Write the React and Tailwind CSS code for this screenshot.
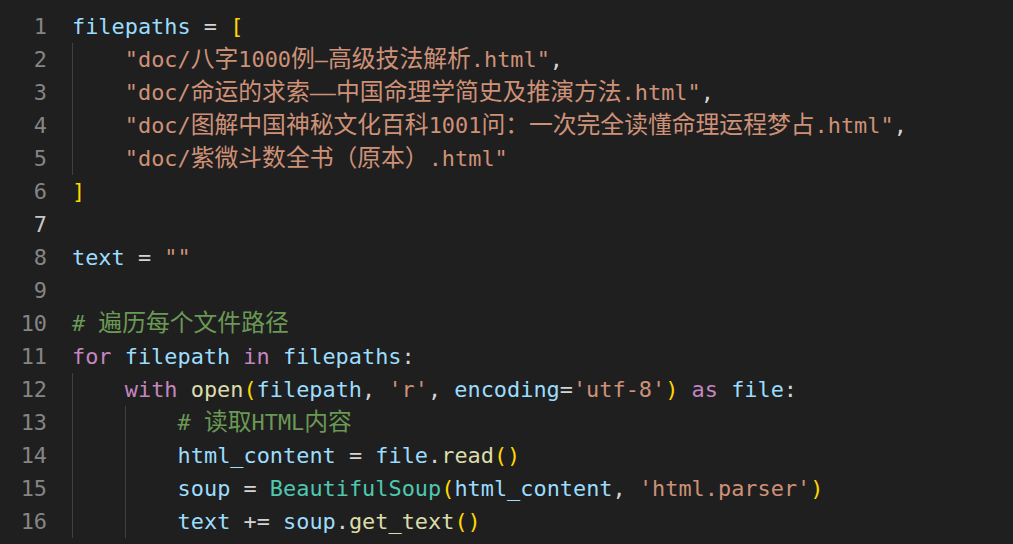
import React from 'react'

// VS Code Dark+ token colours
const V = 'text-[#9cdcfe]'
const O = 'text-[#d4d4d4]'
const Y = 'text-[#ffd700]'
const S = 'text-[#ce9178]'
const C = 'text-[#6a9955]'
const K = 'text-[#c586c0]'
const F = 'text-[#dcdcaa]'
const T = 'text-[#4ec9b0]'

const lines = [
  { indent: 0, t: [['filepaths', V], [' = ', O], ['[', Y]] },
  { indent: 1, t: [['"doc/八字1000例—高级技法解析.html"', S], [',', O]] },
  { indent: 1, t: [['"doc/命运的求索——中国命理学简史及推演方法.html"', S], [',', O]] },
  { indent: 1, t: [['"doc/图解中国神秘文化百科1001问：一次完全读懂命理运程梦占.html"', S], [',', O]] },
  { indent: 1, t: [['"doc/紫微斗数全书（原本）.html"', S]] },
  { indent: 0, t: [[']', Y]] },
  { indent: 0, t: [], active: true },
  { indent: 0, t: [['text', V], [' = ', O], ['""', S]] },
  { indent: 0, t: [] },
  { indent: 0, t: [['# 遍历每个文件路径', C]] },
  { indent: 0, t: [['for', K], [' ', O], ['filepath', V], [' ', O], ['in', K], [' ', O], ['filepaths', V], [':', O]] },
  {
    indent: 1,
    t: [
      ['with', K], [' ', O], ['open', F], ['(', Y], ['filepath', V], [', ', O], ["'r'", S], [', ', O],
      ['encoding', V], ['=', O], ["'utf-8'", S], [')', Y], [' ', O], ['as', K], [' ', O], ['file', V], [':', O],
    ],
  },
  { indent: 2, t: [['# 读取HTML内容', C]] },
  { indent: 2, t: [['html_content', V], [' = ', O], ['file', V], ['.', O], ['read', F], ['()', Y]] },
  {
    indent: 2,
    t: [['soup', V], [' = ', O], ['BeautifulSoup', T], ['(', Y], ['html_content', V], [', ', O], ["'html.parser'", S], [')', Y]],
  },
  { indent: 2, t: [['text', V], [' += ', O], ['soup', V], ['.', O], ['get_text', F], ['()', Y]] },
]

const CJK = /([\u3000-\u303f\u4e00-\u9fff\uff00-\uffef]+)/

function Token({ text, color }) {
  const parts = text.split(CJK)
  return (
    <span className={color}>
      {parts.map((p, i) =>
        i % 2 === 1 ? (
          <span key={i} className="text-[23.8px]">{p}</span>
        ) : (
          <React.Fragment key={i}>{p}</React.Fragment>
        )
      )}
    </span>
  )
}

export default function App() {
  return (
    <div
      className="w-[1013px] h-[544px] overflow-hidden bg-[#1f1f1f] pt-[10px] text-[21.9px]"
      style={{ fontFamily: "'DejaVu Sans Mono', 'Noto Sans CJK SC', monospace" }}
    >
      {lines.map((line, idx) => (
        <div key={idx} className="flex h-[33px] leading-[33px]">
          <div className={`w-[47px] shrink-0 text-right ${line.active ? 'text-[#c6c6c6]' : 'text-[#858585]'}`}>
            {idx + 1}
          </div>
          <div className="ml-[25px] whitespace-pre">
            {Array.from({ length: line.indent }).map((_, g) => (
              <span key={g} className="inline-block w-[52.8px] h-[33px] align-top border-l border-[#404040]" />
            ))}
            {line.t.map(([text, color], i) => (
              <Token key={i} text={text} color={color} />
            ))}
          </div>
        </div>
      ))}
    </div>
  )
}
